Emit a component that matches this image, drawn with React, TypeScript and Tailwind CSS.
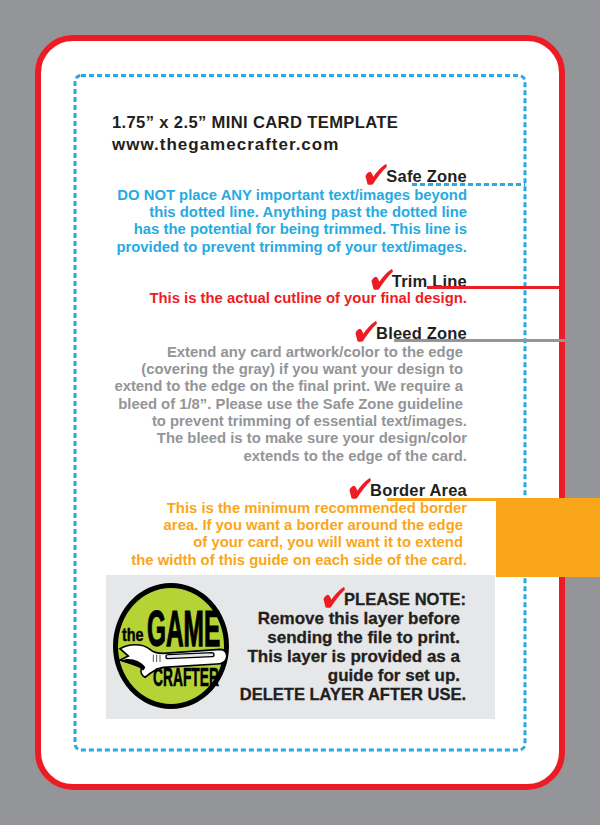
const sans = "font-['Liberation_Sans',Arial,sans-serif]";
const narrow = "font-['Liberation_Sans_Narrow','Liberation_Sans',sans-serif]";

const blueLines = [
  "DO NOT place ANY important text/images beyond",
  "this dotted line. Anything past the dotted line",
  "has the potential for being trimmed. This line is",
  "provided to prevent trimming of your text/images.",
];

const greyLines = [
  { text: "Extend any card artwork/color to the edge", inset: true },
  { text: "(covering the gray) if you want your design to", inset: true },
  { text: "extend to the edge on the final print. We require a", inset: true },
  { text: "bleed of 1/8”. Please use the Safe Zone guideline", inset: true },
  { text: "to prevent trimming of essential text/images.", inset: false },
  { text: "The bleed is to make sure your design/color", inset: false },
  { text: "extends to the edge of the card.", inset: false },
];

const orangeLines = [
  { text: "This is the minimum recommended border", inset: false },
  { text: "area. If you want a border around the edge", inset: true },
  { text: "of your card, you will want it to extend", inset: true },
  { text: "the width of this guide on each side of the card.", inset: false },
];

function Check({ className }: { className?: string }) {
  return (
    <svg viewBox="0 0 64 62" className={className} fill="#ed1c24">
      <path d="M1 36C3 29 9 24 14 23C18 24 22 30 24 38C33 23 47 9 61 0C63 1 64 5 64 8C48 23 34 42 23 60C18 62 11 62 7 60C5 52 3 44 1 36Z" />
    </svg>
  );
}

function Heading({ children }: { children: string }) {
  return (
    <div className="flex h-[18px] items-center justify-end">
      <Check className="mb-[5px] -mr-[1px] h-[21px] w-[22px]" />
      <span className="pb-[2px] text-[16.5px] leading-[18px] font-bold tracking-[0.2px] text-[#231f20]">
        {children}
      </span>
    </div>
  );
}

function Logo() {
  return (
    <div className="relative h-[126px] w-[116px] shrink-0 rounded-[50%] border-[5px] border-black bg-[#b5d334]">
      <span className={`absolute top-[37px] left-[4px] origin-left scale-x-[0.8] text-[18px] leading-[20px] font-bold text-black [-webkit-text-stroke:0.4px_black] ${narrow}`}>
        the
      </span>
      <span className={`absolute top-[18px] left-[29px] origin-left scale-x-[0.61] scale-y-[1.25] text-[40px] leading-[44px] font-bold text-black [-webkit-text-stroke:1px_black] ${narrow}`}>
        GAME
      </span>
      <svg viewBox="0 0 390 450" className="absolute -top-[18px] -left-[18px] h-[150px] w-[130px]">
        <path
          d="M60 236C85 222 125 218 150 238C158 246 170 250 190 250L360 238C378 238 384 255 378 268C374 278 365 282 350 282L190 292C170 296 155 305 135 322C125 316 120 305 125 295C115 285 90 280 60 270L85 258Z"
          fill="#fff"
          stroke="#000"
          strokeWidth="5"
        />
        <path d="M62 272C85 262 118 268 136 292C132 300 128 306 126 296C115 285 90 282 62 272Z" fill="#000" />
        <path d="M204 254L336 248C344 248 344 260 336 260L204 266C196 266 196 254 204 254Z" fill="#e6e7e8" stroke="#000" strokeWidth="4" />
        <path d="M160 254V276M170 254V276M180 254V276" stroke="#555" strokeWidth="3" />
      </svg>
      <span className={`absolute top-[77px] left-[35px] origin-left scale-x-[0.6] scale-y-[1.15] text-[23px] leading-[24px] font-bold text-black [-webkit-text-stroke:0.5px_black] ${narrow}`}>
        CRAFTER
      </span>
    </div>
  );
}

export default function App() {
  return (
    <div className={`relative h-[825px] w-[600px] overflow-hidden bg-[#939598] p-[35px] ${sans}`}>
      <div className="relative h-[755px] w-[530px] rounded-[38px] border-[6px] border-[#ed1c24] bg-white pt-[71px] pr-[92px] pl-[65px]">
        <div className="text-[#231f20]">
          <div className="pl-[6px] text-[16.6px] leading-[22px] font-bold tracking-[0.35px]">
            1.75” x 2.5” MINI CARD TEMPLATE
          </div>
          <div className="pl-[6px] text-[17px] leading-[22px] font-bold tracking-[1px]">
            www.thegamecrafter.com
          </div>
        </div>

        <div className="mt-[12px]">
          <Heading>Safe Zone</Heading>
          <div className="pt-[1px]">
            {blueLines.map((line) => (
              <div key={line} className="text-right text-[14.85px] leading-[17.2px] font-bold whitespace-nowrap text-[#27aae1]">
                {line}
              </div>
            ))}
          </div>
        </div>

        <div className="mt-[17px]">
          <Heading>Trim Line</Heading>
          <div className="-mt-[1px] text-right text-[14.85px] leading-[16px] font-bold whitespace-nowrap text-[#ed1c24]">
            This is the actual cutline of your final design.
          </div>
        </div>

        <div className="mt-[19px]">
          <Heading>Bleed Zone</Heading>
          <div className="pt-[1px]">
            {greyLines.map((line) => (
              <div
                key={line.text}
                className={`text-right text-[14.85px] leading-[17.3px] font-bold whitespace-nowrap text-[#939598] ${line.inset ? "pr-[4px]" : ""}`}
              >
                {line.text}
              </div>
            ))}
          </div>
        </div>

        <div className="mt-[17px]">
          <Heading>Border Area</Heading>
          {orangeLines.map((line) => (
            <div
              key={line.text}
              className={`text-right text-[14.85px] leading-[17.3px] font-bold whitespace-nowrap text-[#faa61a] ${line.inset ? "pr-[4px]" : ""}`}
            >
              {line.text}
            </div>
          ))}
        </div>

        <div className="mt-[6px] -mr-[28px] flex h-[144px] items-start bg-[#e6e7e8] pt-[8px] pr-[29px] pl-[7px]">
          <Logo />
          <div className="flex-1 pt-[6px] text-right text-[17px] leading-[19px] font-bold whitespace-nowrap text-[#231f20] [-webkit-text-stroke:0.3px_#231f20]">
            <div className="flex h-[20px] items-center justify-end">
              <Check className="mb-[3px] -mr-[1px] h-[21px] w-[22px]" />
              <span className="text-[16.5px]">PLEASE NOTE:</span>
            </div>
            <div className="pr-[6px]">Remove this layer before</div>
            <div className="pr-[6px]">sending the file to print.</div>
            <div className="pr-[6px]">This layer is provided as a</div>
            <div className="pr-[6px]">guide for set up.</div>
            <div className="text-[16.5px]">DELETE LAYER AFTER USE.</div>
          </div>
        </div>
      </div>

      {/* guide overlays */}
      <svg className="absolute top-0 left-0 h-[825px] w-[600px]" viewBox="0 0 600 825" fill="none">
        <rect x="75" y="75.5" width="450" height="674.5" rx="6" stroke="#27aae1" strokeWidth="3" strokeDasharray="5 3" />
        <path d="M412 184.5H525" stroke="#27aae1" strokeWidth="3" strokeDasharray="5 3" />
      </svg>
      <div className="absolute top-[286px] left-[427px] h-[3px] w-[138px] bg-[#ed1c24]" />
      <div className="absolute top-[339px] left-[394px] h-[3px] w-[172px] bg-[#939598]" />
      <div className="absolute top-[498px] left-[387px] h-[3px] w-[109px] bg-[#faa61a]" />
      <div className="absolute top-[498px] left-[496px] h-[79px] w-[104px] bg-[#faa61a]" />
    </div>
  );
}
